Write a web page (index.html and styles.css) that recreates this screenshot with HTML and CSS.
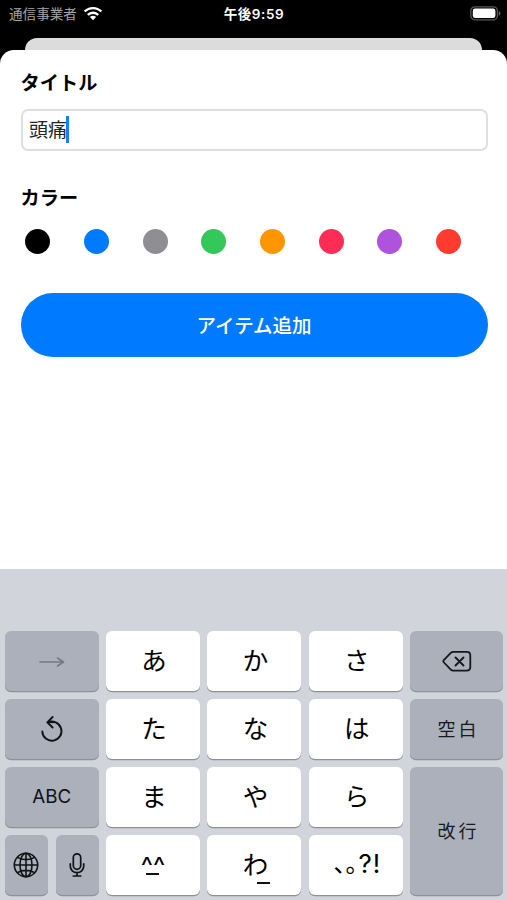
FILE: index.html
```html
<!DOCTYPE html>
<html lang="ja">
<head>
<meta charset="utf-8">
<meta name="viewport" content="width=device-width, initial-scale=1">
<title>アイテム追加</title>
<link rel="stylesheet" href="styles.css">
</head>
<body>
<div class="screen">
  <header class="status">
    <div class="carrier"><span>通信事業者</span>
      <svg class="wifi" viewBox="0 0 20 15" width="20" height="15">
        <path d="M1.7 5.5C6.2.9 13.8.9 18.3 5.5" fill="none" stroke="#fff" stroke-width="2.3"/>
        <path d="M4.8 8.9c2.9-2.9 7.5-2.9 10.4 0" fill="none" stroke="#fff" stroke-width="2.3"/>
        <path d="M6.9 11c1.8-1.6 4.4-1.6 6.2 0L10 14.2z" fill="#fff"/>
      </svg>
    </div>
    <div class="time">午後9:59</div>
    <svg class="battery" viewBox="0 0 31 15" width="31" height="15">
      <rect x=".8" y=".8" width="26.6" height="13" rx="4" fill="none" stroke="#58585a" stroke-width="1.3"/>
      <rect x="2.8" y="2.5" width="22.6" height="9.6" rx="2.4" fill="#fff"/>
      <path d="M28.8 5v4.8c2.1-.7 2.1-4.1 0-4.8z" fill="#68686a"/>
    </svg>
  </header>
  <div class="backdrop"></div>
  <main class="sheet">
    <h2 class="label">タイトル</h2>
    <div class="field"><span>頭痛</span><i class="caret"></i></div>
    <h2 class="label label-color">カラー</h2>
    <div class="colors">
      <i class="dot black"></i><i class="dot blue"></i><i class="dot gray"></i><i class="dot green"></i><i class="dot orange"></i><i class="dot pink"></i><i class="dot purple"></i><i class="dot red"></i>
    </div>
    <button class="submit">アイテム追加</button>
  </main>
  <section class="keyboard">
    <div class="key fn">
      <svg viewBox="0 0 26 14" width="26" height="14" fill="none" stroke="#757981" stroke-width="1.6" stroke-linecap="round" stroke-linejoin="round"><path d="M1 8h23.5M18.500 4l6 4-6 4"/></svg>
    </div>
    <div class="key kana">あ</div>
    <div class="key kana">か</div>
    <div class="key kana">さ</div>
    <div class="key fn">
      <svg viewBox="0 0 30 22" width="30" height="22" fill="none" stroke="#15171b" stroke-width="1.8" stroke-linecap="round" stroke-linejoin="round"><path d="M11.2 1.900h13.600q3.500 0 3.500 3.500v11.700q0 3.500-3.500 3.500H11.200q-1.400 0-2.400-1L2 12.500q-1.300-1.300 0-2.600L8.800 2.900q1-1 2.400-1zM13.500 7.500l8 8M21.500 7.500l-8 8"/></svg>
    </div>

    <div class="key fn">
      <svg viewBox="0 0 24 28" width="24" height="28" fill="none" stroke="#101216" stroke-width="1.9" stroke-linecap="round" stroke-linejoin="round"><path d="M2.300 16.500A9.600 9.600 0 1 0 7.700 7.500Q10 6.700 12.800 7.300M12.600 2L7.300 7.300l5.300 5.200"/></svg>
    </div>
    <div class="key kana">た</div>
    <div class="key kana">な</div>
    <div class="key kana">は</div>
    <div class="key fn word">空白</div>

    <div class="key fn latin">ABC</div>
    <div class="key kana">ま</div>
    <div class="key kana">や</div>
    <div class="key kana">ら</div>
    <div class="key fn word enter">改行</div>

    <div class="pair">
      <div class="key fn">
        <svg viewBox="0 0 26 26" width="26" height="26" fill="none" stroke="#101216" stroke-width="1.6"><circle cx="13" cy="13" r="11.700"/><ellipse cx="13" cy="13" rx="6" ry="11.700"/><path d="M13 1.300v23.400M1.300 13h23.400M4.500 5.300c4.700 3.100 12.300 3.100 17 0M4.500 20.700c4.700-3.100 12.300-3.100 17 0"/></svg>
      </div>
      <div class="key fn">
        <svg viewBox="0 0 16 26" width="16" height="26" fill="none" stroke="#101216" stroke-width="1.700" stroke-linecap="round"><rect x="4.300" y="1.800" width="7.400" height="15.500" rx="3.700"/><path d="M1.300 11.800v2.400a6.700 6.500 0 0 0 13.400 0v-2.400M8 20.800v3.200M4.300 24h7.400"/></svg>
      </div>
    </div>
    <div class="key face"><span>^^</span><i class="bar"></i></div>
    <div class="key kana wa">わ<i class="bar"></i></div>
    <div class="key punct"><span class="kuten">、。</span><span class="marks">?!</span></div>
  </section>
</div>
</body>
</html>
```

FILE: styles.css
```css
* { box-sizing: border-box; }
body { margin: 0; background: #000; }
.screen {
  width: 507px;
  height: 900px;
  display: flex;
  flex-direction: column;
  overflow: hidden;
  background: #000;
  color: #000;
  font-family: Inter, "Noto Sans CJK JP", sans-serif;
}
.status {
  height: 38px;
  padding: 5px 6px 0 9px;
  display: grid;
  grid-template-columns: 1fr auto 1fr;
  align-items: start;
  color: #fff;
  font-size: 13.6px;
  line-height: 18px;
}
.carrier { display: flex; gap: 6px; color: #a5a5a5; }
.wifi { margin-top: 1px; }
.time { margin-left: -2px; font-weight: 600; font-size: 13.5px; letter-spacing: 0.6px; }
.battery { justify-self: end; margin-top: 1px; }
.backdrop {
  flex: none;
  height: 12px;
  margin: 0 25px;
  border-radius: 12px 12px 0 0;
  background: #dcdcdc;
}
.sheet {
  height: 519px;
  padding: 19px 19.400px 0 20.600px;
  border-radius: 14px 14px 0 0;
  background: #fff;
}
.label { margin: 0; font-size: 19.200px; line-height: 28px; font-weight: 700; }
.field {
  display: flex;
  align-items: center;
  height: 42px;
  margin-top: 12px;
  padding-left: 6.500px;
  border: 2px solid #dfdfe1;
  border-radius: 7px;
  font-size: 19px;
  line-height: 28px;
  color: #222;
}
.field span { padding-top: 2px; }
.caret { width: 3px; height: 27px; margin: -1px 0 0 -1px; background: #1680f5; }
.label-color { margin-top: 33px; }
.colors { display: flex; gap: 33.700px; margin: 17.400px 0 0 4.600px; }
.dot { width: 25px; height: 25px; border-radius: 50%; }
.black { background: #000; }
.blue { background: #007aff; }
.gray { background: #8e8e93; }
.green { background: #34c759; }
.orange { background: #ff9500; }
.pink { background: #ff2d55; }
.purple { background: #af52de; }
.red { background: #ff3b30; }
.submit {
  display: block;
  width: 100%;
  height: 64px;
  margin-top: 38.600px;
  padding: 0;
  border: 0;
  border-radius: 32px;
  background: #007aff;
  color: #fff;
  font: 500 19.500px/28px "Noto Sans CJK JP", sans-serif;
}
.keyboard {
  height: 331px;
  padding: 62px 4px 0 4.700px;
  display: grid;
  grid-template-columns: repeat(4, 94px) 92.500px;
  grid-template-rows: repeat(4, 60px);
  gap: 8px 7.400px;
  background: #d1d4db;
}
.key {
  display: flex;
  align-items: center;
  justify-content: center;
  border-radius: 6px;
  background: #fff;
  box-shadow: 0 1.300px 0 #8e9197;
  font-size: 25.500px;
  line-height: 30px;
}
.kana { padding-left: 2px; }
.fn { background: #abb0ba; }
.word { font-size: 18px; letter-spacing: 3px; padding: 2px 0 0 4px; color: #17191d; }
.latin { font-size: 18.800px; color: #101216; }
.enter { grid-row: 3 / 5; grid-column: 5; }
.pair { display: grid; grid-template-columns: 43.500px 43px; gap: 7.500px; }
.face { flex-direction: column; }
.face span { font-size: 26px; line-height: 22px; height: 18px; }
.face .bar { margin-left: -2px; }
.bar { width: 13px; height: 2px; background: #111; }
.wa { position: relative; }
.wa .bar { position: absolute; left: 50px; bottom: 11px; }
.punct { padding: 0 0 2px 3px; }
.kuten { font-family: "Noto Sans CJK JP", sans-serif; font-size: 24px; font-feature-settings: "halt"; padding-bottom: 5px; }
.marks { margin-left: 1px; font-size: 26px; letter-spacing: 1px; }
```
